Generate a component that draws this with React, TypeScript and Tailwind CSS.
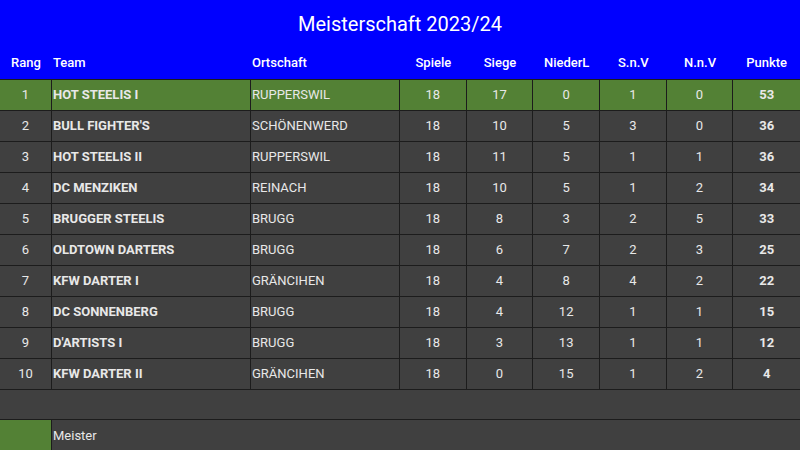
const rows = [
  { rang: 1, team: 'HOT STEELIS I', ort: 'RUPPERSWIL', spiele: 18, siege: 17, nied: 0, snv: 1, nnv: 0, punkte: 53 },
  { rang: 2, team: "BULL FIGHTER'S", ort: 'SCHÖNENWERD', spiele: 18, siege: 10, nied: 5, snv: 3, nnv: 0, punkte: 36 },
  { rang: 3, team: 'HOT STEELIS II', ort: 'RUPPERSWIL', spiele: 18, siege: 11, nied: 5, snv: 1, nnv: 1, punkte: 36 },
  { rang: 4, team: 'DC MENZIKEN', ort: 'REINACH', spiele: 18, siege: 10, nied: 5, snv: 1, nnv: 2, punkte: 34 },
  { rang: 5, team: 'BRUGGER STEELIS', ort: 'BRUGG', spiele: 18, siege: 8, nied: 3, snv: 2, nnv: 5, punkte: 33 },
  { rang: 6, team: 'OLDTOWN DARTERS', ort: 'BRUGG', spiele: 18, siege: 6, nied: 7, snv: 2, nnv: 3, punkte: 25 },
  { rang: 7, team: 'KFW DARTER I', ort: 'GRÄNCIHEN', spiele: 18, siege: 4, nied: 8, snv: 4, nnv: 2, punkte: 22 },
  { rang: 8, team: 'DC SONNENBERG', ort: 'BRUGG', spiele: 18, siege: 4, nied: 12, snv: 1, nnv: 1, punkte: 15 },
  { rang: 9, team: "D'ARTISTS I", ort: 'BRUGG', spiele: 18, siege: 3, nied: 13, snv: 1, nnv: 1, punkte: 12 },
  { rang: 10, team: 'KFW DARTER II', ort: 'GRÄNCIHEN', spiele: 18, siege: 0, nied: 15, snv: 1, nnv: 2, punkte: 4 },
];

const headers = ['Spiele', 'Siege', 'NiederL', 'S.n.V', 'N.n.V', 'Punkte'];

const cols = 'grid grid-cols-[52px_199px_149px_repeat(6,1fr)]';

export default function App() {
  return (
    <div className="w-[800px] h-[450px] bg-[#404040] text-[#e8e8e8] font-['Roboto',sans-serif] text-[13px] overflow-hidden">
      {/* Title + header */}
      <div className="bg-[#0000ff] text-white">
        <div className="h-[47px] flex items-center justify-center text-[20px] pt-[1px]">Meisterschaft 2023/24</div>
        <div className={`${cols} h-[32px] items-center text-[13px] font-medium`}>
          <div className="text-center">Rang</div>
          <div className="pl-[1px]">Team</div>
          <div className="pl-[1px]">Ortschaft</div>
          {headers.map(h => (
            <div key={h} className="text-center">{h}</div>
          ))}
        </div>
      </div>

      {/* Rows */}
      <div className="border-t border-[#1c1c1c]">
        {rows.map(r => (
          <div
            key={r.rang}
            className={`${cols} h-[31px] border-b border-[#1c1c1c] ${r.rang === 1 ? 'bg-[#538135]' : ''}`}
          >
            <div className="flex items-center justify-center border-r border-[#1c1c1c]">{r.rang}</div>
            <div className="flex items-center pl-[1px] border-r border-[#1c1c1c] font-bold">{r.team}</div>
            <div className="flex items-center pl-[1px] border-r border-[#1c1c1c]">{r.ort}</div>
            <div className="flex items-center justify-center border-r border-[#1c1c1c]">{r.spiele}</div>
            <div className="flex items-center justify-center border-r border-[#1c1c1c]">{r.siege}</div>
            <div className="flex items-center justify-center border-r border-[#1c1c1c]">{r.nied}</div>
            <div className="flex items-center justify-center border-r border-[#1c1c1c]">{r.snv}</div>
            <div className="flex items-center justify-center border-r border-[#1c1c1c]">{r.nnv}</div>
            <div className="flex items-center justify-center font-bold">{r.punkte}</div>
          </div>
        ))}
      </div>

      {/* Spacer row */}
      <div className="h-[30px] border-b border-[#1c1c1c]" />

      {/* Legend */}
      <div className="flex h-[31px]">
        <div className="w-[52px] bg-[#538135] border-r border-[#1c1c1c]" />
        <div className="flex items-center pl-[1px]">Meister</div>
      </div>
    </div>
  );
}
